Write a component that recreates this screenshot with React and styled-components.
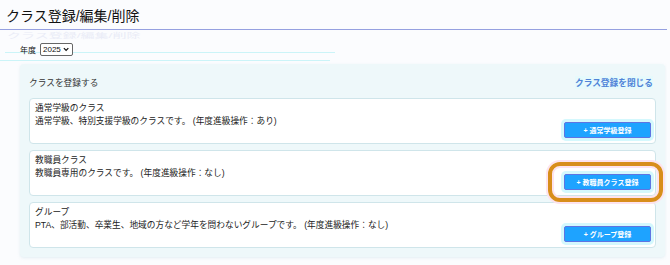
import React from 'react'
import styled, { createGlobalStyle } from 'styled-components'

const GlobalStyle = createGlobalStyle`
  body {
    margin: 0;
    background: #fbfcfe;
    font-family: "Liberation Sans", "Noto Sans CJK JP", sans-serif;
    color: #222;
  }
`

const classTypes = [
  {
    title: '通常学級のクラス',
    desc: '通常学級、特別支援学級のクラスです。 (年度進級操作：あり)',
    button: '通常学級登録'
  },
  {
    title: '教職員クラス',
    desc: '教職員専用のクラスです。 (年度進級操作：なし)',
    button: '教職員クラス登録',
    highlight: true
  },
  {
    title: 'グループ',
    desc: 'PTA、部活動、卒業生、地域の方など学年を問わないグループです。 (年度進級操作：なし)',
    button: 'グループ登録'
  }
]

function YearSelect() {
  return (
    <SelectBox>
      <SelectText>2025</SelectText>
      <svg width="7" height="5" viewBox="0 0 7 5">
        <path d="M1 1 L3.5 3.6 L6 1" fill="none" stroke="#111" strokeWidth="1.4" />
      </svg>
    </SelectBox>
  )
}

function ClassCard({ title, desc, button, highlight }) {
  const btn = <AddButton>+ {button}</AddButton>
  return (
    <Card>
      <CardText>
        <CardTitle>{title}</CardTitle>
        <CardDesc>{desc}</CardDesc>
      </CardText>
      {highlight ? <Highlight>{btn}</Highlight> : btn}
    </Card>
  )
}

export default function App() {
  return (
    <Page>
      <GlobalStyle />
      <Title>クラス登録/編集/削除</Title>
      <Ghost>クラス登録/編集/削除</Ghost>
      <YearRow>
        <YearLabel>年度</YearLabel>
        <YearSelect />
      </YearRow>
      <Rule $offset={-4} $left={5} />
      <Rule $offset={7} $left={0} />
      <Panel>
        <PanelHeader>
          <PanelTitle>クラスを登録する</PanelTitle>
          <CloseLink>クラス登録を閉じる</CloseLink>
        </PanelHeader>
        <CardList>
          {classTypes.map(c => (
            <ClassCard key={c.title} {...c} />
          ))}
        </CardList>
      </Panel>
    </Page>
  )
}

const Page = styled.div`
  width: 667px;
  height: 265px;
  overflow: hidden;
`

const Title = styled.h1`
  margin: 0;
  padding: 7px 0 3px 6px;
  font-size: 14px;
  line-height: 19px;
  font-weight: 400;
  color: #111;
  border-bottom: 1px solid #95a0e0;
`

const Ghost = styled.div`
  margin: 3px 0 0 7px;
  height: 6px;
  font-size: 7px;
  line-height: 6px;
  color: #eaecf7;
  white-space: nowrap;
  transform: scaleX(2);
  transform-origin: left center;
`

const YearRow = styled.div`
  display: flex;
  align-items: center;
  gap: 4px;
  height: 14px;
  margin: 3px 0 0 20px;
`

const YearLabel = styled.span`
  font-size: 8px;
  color: #111;
`

const SelectBox = styled.span`
  display: inline-flex;
  align-items: center;
  gap: 2px;
  box-sizing: border-box;
  width: 33px;
  height: 13px;
  padding: 0 3px 0 2px;
  border: 1px solid #666;
  border-radius: 2px;
  background: #fff;
`

const SelectText = styled.span`
  font-size: 8px;
  color: #111;
`

const Rule = styled.div`
  height: 1px;
  width: 330px;
  margin-top: ${p => p.$offset}px;
  margin-left: ${p => p.$left}px;
  background: #cbf4f8;
`

const Panel = styled.section`
  box-sizing: border-box;
  width: 645px;
  margin: 3px 0 0 20px;
  padding: 12px 9px 9px 9px;
  background: #eef8fa;
  border-radius: 4px;
  box-shadow: 0 1px 3px rgba(160, 200, 210, 0.25);
`

const PanelHeader = styled.div`
  display: flex;
  justify-content: space-between;
  align-items: center;
  height: 13px;
  padding-right: 3px;
  font-size: 8.7px;
`

const PanelTitle = styled.span`
  color: #333;
`

const CloseLink = styled.a`
  color: #4f84d8;
  font-weight: 700;
  background: #e6fafc;
  cursor: pointer;
`

const CardList = styled.div`
  display: flex;
  flex-direction: column;
  gap: 6px;
  margin-top: 9px;
`

const Card = styled.div`
  box-sizing: border-box;
  display: flex;
  justify-content: space-between;
  height: 46px;
  padding: 3px 5px 5px 5px;
  background: #fff;
  border: 1px solid #cfe5ea;
  border-radius: 4px;
`

const CardText = styled.div`
  font-size: 8.7px;
  line-height: 13px;
  color: #222;
`

const CardTitle = styled.div``

const CardDesc = styled.div``

const AddButton = styled.button`
  align-self: flex-end;
  box-sizing: border-box;
  width: 87px;
  height: 16px;
  margin-right: -1px;
  padding: 0;
  border: 1px solid #5f74e2;
  border-radius: 2px;
  background: #1ea3ff;
  box-shadow: 0 0 0 3px #d4f8fd;
  color: #fff;
  font-family: inherit;
  font-size: 7px;
  font-weight: 700;
  cursor: pointer;
`

const Highlight = styled.div`
  position: relative;
  align-self: flex-end;
  display: flex;

  &::after {
    content: '';
    position: absolute;
    inset: -12px -13px -12px -16px;
    border: 4px solid #d88e1b;
    border-radius: 12px;
    box-shadow: 0 0 0 2px #fde3ee, inset 0 0 0 2px #fde3ee;
    pointer-events: none;
  }
`
